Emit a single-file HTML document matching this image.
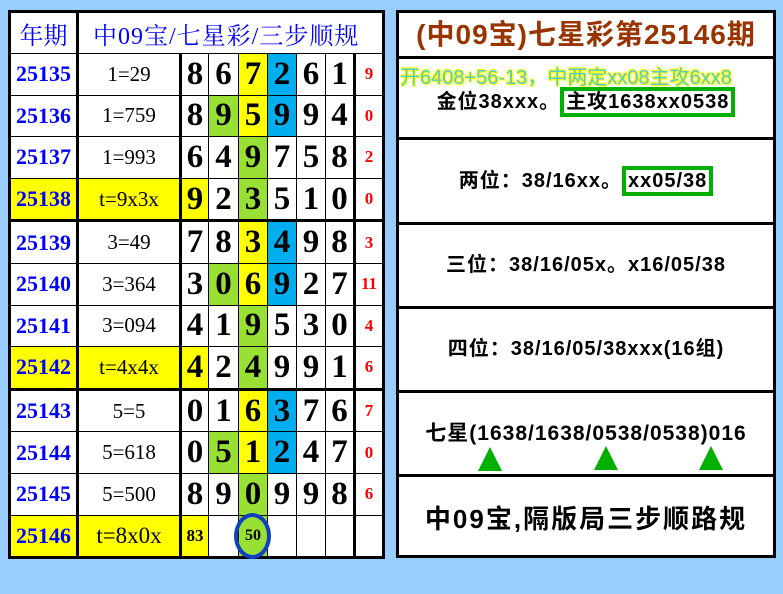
<!DOCTYPE html>
<html><head><meta charset="utf-8"><style>
body{margin:0;width:783px;height:594px;background:#99ccff;position:relative;overflow:hidden;font-family:"Liberation Sans","Noto Sans CJK SC",sans-serif}
table.L{position:absolute;left:8px;top:10px;border-collapse:collapse;table-layout:fixed;border:3px solid #000;background:#fff}
table.L td{border:1px solid #000;padding:0;text-align:center;vertical-align:middle;overflow:visible;white-space:nowrap}
.hd td{height:40px;color:#0000ff;font-family:"Liberation Serif","Noto Serif CJK SC",serif;font-size:24px;font-weight:normal;border-bottom:3px solid #000}
tr.r td{height:40.6px}
tr.t td{border-top:3px solid #000}
.p{color:#0000ff;font:bold 22px "Liberation Serif",serif}
.f{font:21px "Liberation Serif",serif;color:#000}
.d{font:bold 33px "Liberation Serif",serif;color:#000}
.c{font:bold 17px "Liberation Serif",serif;color:#f00}
.bl{border-left:3px solid #000!important}
.Y{background:#ffff00}.G{background:#99e035}.B{background:#00aeef}
.R{position:absolute;left:396px;top:10px;width:374px;height:542px;border:3px solid #000;background:#fff}
.s{position:absolute;left:0;width:374px;border-top:3px solid #000;font-weight:bold;font-size:20px;letter-spacing:1px;color:#000;text-align:center;white-space:nowrap}
.box{border:4px solid #00b000;padding:0 2px}
.tri{position:absolute;width:0;height:0;border-left:12px solid transparent;border-right:12px solid transparent;border-bottom:24px solid #00b000}
</style></head><body>
<table class="L">
<colgroup><col style="width:68px"><col style="width:103px"><col style="width:28px"><col style="width:30px"><col style="width:29px"><col style="width:29px"><col style="width:29px"><col style="width:29px"><col style="width:29px"></colgroup>
<tr class="hd"><td>年期</td><td colspan="8" class="bl" style="text-align:left;padding-left:14px;letter-spacing:1px">中09宝/七星彩/三步顺规</td></tr>
<tr class="r"><td class="p">25135</td><td class="f bl">1=29</td><td class="d bl">8</td><td class="d">6</td><td class="d Y">7</td><td class="d B">2</td><td class="d">6</td><td class="d">1</td><td class="c bl">9</td></tr>
<tr class="r"><td class="p">25136</td><td class="f bl">1=759</td><td class="d bl">8</td><td class="d G">9</td><td class="d Y">5</td><td class="d B">9</td><td class="d">9</td><td class="d">4</td><td class="c bl">0</td></tr>
<tr class="r"><td class="p">25137</td><td class="f bl">1=993</td><td class="d bl">6</td><td class="d">4</td><td class="d G">9</td><td class="d">7</td><td class="d">5</td><td class="d">8</td><td class="c bl">2</td></tr>
<tr class="r"><td class="p Y">25138</td><td class="f bl Y">t=9x3x</td><td class="d bl Y">9</td><td class="d">2</td><td class="d G">3</td><td class="d">5</td><td class="d">1</td><td class="d">0</td><td class="c bl">0</td></tr>
<tr class="r t"><td class="p">25139</td><td class="f bl">3=49</td><td class="d bl">7</td><td class="d">8</td><td class="d Y">3</td><td class="d B">4</td><td class="d">9</td><td class="d">8</td><td class="c bl">3</td></tr>
<tr class="r"><td class="p">25140</td><td class="f bl">3=364</td><td class="d bl">3</td><td class="d G">0</td><td class="d Y">6</td><td class="d B">9</td><td class="d">2</td><td class="d">7</td><td class="c bl">11</td></tr>
<tr class="r"><td class="p">25141</td><td class="f bl">3=094</td><td class="d bl">4</td><td class="d">1</td><td class="d G">9</td><td class="d">5</td><td class="d">3</td><td class="d">0</td><td class="c bl">4</td></tr>
<tr class="r"><td class="p Y">25142</td><td class="f bl Y">t=4x4x</td><td class="d bl Y">4</td><td class="d">2</td><td class="d G">4</td><td class="d">9</td><td class="d">9</td><td class="d">1</td><td class="c bl">6</td></tr>
<tr class="r t"><td class="p">25143</td><td class="f bl">5=5</td><td class="d bl">0</td><td class="d">1</td><td class="d Y">6</td><td class="d B">3</td><td class="d">7</td><td class="d">6</td><td class="c bl">7</td></tr>
<tr class="r"><td class="p">25144</td><td class="f bl">5=618</td><td class="d bl">0</td><td class="d G">5</td><td class="d Y">1</td><td class="d B">2</td><td class="d">4</td><td class="d">7</td><td class="c bl">0</td></tr>
<tr class="r"><td class="p">25145</td><td class="f bl">5=500</td><td class="d bl">8</td><td class="d">9</td><td class="d G">0</td><td class="d">9</td><td class="d">9</td><td class="d">8</td><td class="c bl">6</td></tr>
<tr class="r"><td class="p Y">25146</td><td class="f bl Y" style="font-size:23px">t=8x0x</td><td class="bl Y" style="font:bold 17px 'Liberation Serif',serif">83</td><td></td><td class="G" style="font:bold 16px 'Liberation Serif',serif;position:relative">50<div style="position:absolute;left:-5px;top:-3px;width:37px;height:46px;border:4px solid #1040c0;border-radius:50%;box-sizing:border-box"></div></td><td></td><td></td><td></td><td class="bl"></td></tr>
</table>
<div class="R">
<div style="position:absolute;top:0;width:374px;height:43px;line-height:43px;text-align:center;color:#993300;font-weight:bold;font-size:28px;letter-spacing:1px;white-space:nowrap">(中09宝)七星彩第25146期</div>
<div class="s" style="top:43px;height:81px">
<div style="position:absolute;left:1px;top:2px;color:#55cccc;font-size:20px;letter-spacing:0;font-weight:normal;white-space:nowrap;text-shadow:0 0 2px #ff0,0 0 2px #ff0,1px 1px 1px #ff0,-1px -1px 1px #ff0">开6408+56-13，中两定xx08主攻6xx8</div>
<div style="position:absolute;left:0;width:374px;top:28px;line-height:30px">金位38xxx。<span class="box">主攻1638xx0538</span></div></div>
<div class="s" style="top:124px;height:82px;line-height:82px">两位：38/16xx。<span class="box">xx05/38</span></div>
<div class="s" style="top:209px;height:81px;line-height:81px">三位：38/16/05x。x16/05/38</div>
<div class="s" style="top:293px;height:81px;line-height:81px">四位：38/16/05/38xxx(16组)</div>
<div class="s" style="top:377px;height:81px"><div style="position:absolute;width:374px;top:26px;line-height:30px;font-size:21px">七星(1638/1638/0538/0538)016</div>
<div class="tri" style="left:79px;top:54px"></div><div class="tri" style="left:195px;top:53px"></div><div class="tri" style="left:300px;top:53px"></div></div>
<div class="s" style="top:461px;height:81px;line-height:84px;font-size:26px;letter-spacing:2px">中09宝,隔版局三步顺路规</div>
</div>
</body></html>
